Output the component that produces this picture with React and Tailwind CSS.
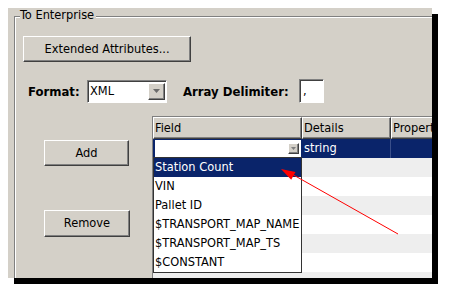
const raised =
  'border border-t-white border-l-white border-r-[#404040] border-b-[#404040] shadow-[inset_-1px_-1px_0_#808080]'
const sunken =
  'border border-t-[#808080] border-l-[#808080] border-r-white border-b-white shadow-[inset_1px_1px_0_#404040]'

const items = ['Station Count', 'VIN', 'Pallet ID', '$TRANSPORT_MAP_NAME', '$TRANSPORT_MAP_TS', '$CONSTANT']

function DownArrow({ small }) {
  return small ? (
    <svg width="5" height="3" viewBox="0 0 5 3"><path d="M0 0h5L2.5 3z" fill="#808080" /></svg>
  ) : (
    <svg width="7" height="4" viewBox="0 0 7 4"><path d="M0 0h7L3.5 4z" fill="#6b6b6b" /></svg>
  )
}

function TableRows() {
  const rows = []
  for (let i = 1; i < 8; i++) {
    rows.push(
      <div key={i} className={`h-[19px] ${i % 2 === 1 ? 'bg-[#eeeeee]' : 'bg-white'}`} />
    )
  }
  return rows
}

export default function App() {
  return (
    <div className="relative w-[451px] h-[293px] bg-white pt-[8px] pl-[8px] text-[12.7px] text-black font-['DejaVu_Sans_Condensed','Liberation_Sans',sans-serif] leading-none">
      <div className="w-[424px] h-[270px] bg-[#d4d0c8] overflow-hidden shadow-[6px_6px_0_#000] pl-[6px] pt-[8px]">
        {/* group box */}
        <div className="relative w-[440px] h-[290px] border-t border-l border-[#808080] shadow-[inset_1px_1px_0_#fff] pl-[8px] pt-[19px]">
          <span className="absolute left-[5px] -top-[8px] bg-[#d4d0c8] pr-[2px]">To Enterprise</span>

          <button className={`w-[168px] h-[26px] bg-[#d4d0c8] ${raised} flex items-center justify-center`}>
            Extended Attributes...
          </button>

          {/* format row */}
          <div className="flex items-center h-[24px] mt-[17px] ml-[5px]">
            <span className="w-[59px] shrink-0 font-bold text-[13px] whitespace-nowrap">Format:</span>
            <div className={`w-[80px] h-[23px] shrink-0 bg-white ${sunken} flex items-center justify-between pl-[2px] pr-[1px]`}>
              <span>XML</span>
              <div className={`w-[17px] h-[17px] bg-[#d4d0c8] ${raised} flex items-center justify-center`}>
                <DownArrow />
              </div>
            </div>
            <span className="w-[132px] shrink-0 pl-[16px] font-bold text-[13px] whitespace-nowrap">Array Delimiter:</span>
            <div className={`w-[25px] h-[24px] shrink-0 bg-white ${sunken} flex items-center pl-[3px]`}>,</div>
          </div>

          {/* lower section */}
          <div className="flex mt-[13px]">
            <div className="w-[129px] pl-[21px] pt-[24px] flex flex-col">
              <button className={`w-[85px] h-[26px] bg-[#d4d0c8] ${raised} flex items-center justify-center`}>Add</button>
              <button className={`w-[86px] h-[27px] mt-[44px] bg-[#d4d0c8] ${raised} flex items-center justify-center`}>Remove</button>
            </div>

            <div className="relative w-[300px] border-l border-t border-[#808080] bg-white">
              {/* header */}
              <div className="flex h-[22px] bg-[#d4d0c8]">
                <div className={`w-[149px] ${raised} flex items-center pl-[1px]`}>Field</div>
                <div className={`w-[89px] ${raised} flex items-center pl-[1px]`}>Details</div>
                <div className={`flex-1 ${raised} flex items-center pl-[1px] whitespace-nowrap`}>Properties</div>
              </div>
              {/* row 0 */}
              <div className="flex h-[19px] bg-[#0a246a] text-white">
                <div className="w-[149px] p-[1px] pl-[2px]">
                  <div className="h-full bg-white flex items-center justify-end pr-[2px]">
                    <div className={`w-[11px] h-[11px] bg-[#d4d0c8] ${raised} flex items-center justify-center`}>
                      <DownArrow small />
                    </div>
                  </div>
                </div>
                <div className="w-[89px] flex items-center pl-[2px] border-r border-[#3a4f8a]">string</div>
                <div className="flex-1" />
              </div>
              <TableRows />

              {/* open dropdown list */}
              <div className="absolute left-0 top-[40px] w-[149px] border border-[#333] bg-white">
                {items.map((t, i) => (
                  <div
                    key={t}
                    className={`h-[19px] flex items-center pl-[1px] whitespace-nowrap overflow-hidden ${i === 0 ? 'bg-[#0a246a] text-white' : ''}`}
                  >
                    {t}
                  </div>
                ))}
              </div>
            </div>
          </div>
        </div>
      </div>

      {/* red annotation arrow */}
      <svg className="absolute left-0 top-0 pointer-events-none" width="451" height="293" viewBox="0 0 451 293">
        <line x1="398" y1="234" x2="290" y2="173" stroke="#ff0000" strokeWidth="1" />
        <path d="M281 169 L291.2 179.7 L295.5 172.1 Z" fill="#ff0000" />
      </svg>
    </div>
  )
}
